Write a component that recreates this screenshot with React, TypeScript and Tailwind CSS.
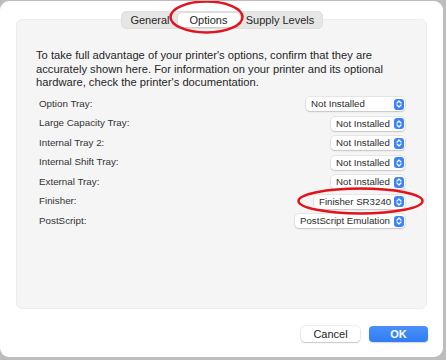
import React from 'react';

const font = { fontFamily: '"Liberation Sans", Arial, sans-serif' };

type Row = { label: string; value: string; width: string };

const rows: Row[] = [
  { label: 'Option Tray:', value: 'Not Installed', width: 'w-[99px]' },
  { label: 'Large Capacity Tray:', value: 'Not Installed', width: 'w-[74px]' },
  { label: 'Internal Tray 2:', value: 'Not Installed', width: 'w-[74px]' },
  { label: 'Internal Shift Tray:', value: 'Not Installed', width: 'w-[74px]' },
  { label: 'External Tray:', value: 'Not Installed', width: 'w-[74px]' },
  { label: 'Finisher:', value: 'Finisher SR3240', width: 'w-[91px]' },
  { label: 'PostScript:', value: 'PostScript Emulation', width: 'w-[110px]' },
];

const Stepper = () => (
  <span className="shrink-0 w-[10px] h-[11px] rounded-[3px] bg-[#3a84f6] flex items-center justify-center">
    <svg width="6" height="8" viewBox="0 0 6 8" fill="none" stroke="white" strokeWidth="1.2" strokeLinecap="round" strokeLinejoin="round">
      <path d="M1 3 L3 1 L5 3" />
      <path d="M1 5 L3 7 L5 5" />
    </svg>
  </span>
);

const Popup: React.FC<{ value: string; width: string }> = ({ value, width }) => (
  <div className={`${width} h-[14px] rounded-[4px] bg-white shadow-[0_0_0_0.5px_rgba(0,0,0,0.12),0_1px_1.5px_rgba(0,0,0,0.15)] flex items-center justify-between pl-[5px] pr-[1.5px]`}>
    <span className="text-[9.7px] text-[#2b2b2b] leading-none whitespace-nowrap">{value}</span>
    <Stepper />
  </div>
);

export default function App() {
  return (
    <div className="w-[446px] h-[360px] bg-[#bdbdbd] overflow-hidden" style={font}>
      <div className="relative w-[443px] h-[356px] mt-[1px] bg-white rounded-[9px] flex flex-col">
        {/* settings panel */}
        <div className="mx-[16px] mt-[18px] h-[290px] bg-[#f5f5f5] rounded-[6px] border border-[#ececec] flex flex-col">
          <div className="self-center -mt-[9px] w-[202px] h-[18px] rounded-[5px] bg-[#e6e6e6] border border-[#e0e0e0] flex items-center p-[1px] text-[11px] text-[#262626]">
            <div className="w-[55px] h-full flex items-center justify-center">General</div>
            <div className="w-[62px] h-full flex items-center justify-center bg-white rounded-[4px] shadow-[0_0_1px_rgba(0,0,0,0.3),0_1px_1px_rgba(0,0,0,0.08)]">Options</div>
            <div className="flex-1 h-full flex items-center justify-center">Supply Levels</div>
          </div>

          <p className="mt-[20px] pl-[19px] pr-[18px] text-[11.2px] leading-[13.5px] text-[#262626]">
            To take full advantage of your printer's options, confirm that they are accurately shown here. For information on your printer and its optional hardware, check the printer's documentation.
          </p>

          <div className="mt-[5px] pl-[22px] pr-[21px] flex flex-col">
            {rows.map((r) => (
              <div key={r.label} className="h-[19.5px] flex items-center justify-between">
                <span className="text-[9.8px] text-[#333]">{r.label}</span>
                <Popup value={r.value} width={r.width} />
              </div>
            ))}
          </div>
        </div>

        {/* buttons */}
        <div className="mt-[17px] pr-[15px] flex justify-end gap-[9px] text-[11px]">
          <button className="w-[59px] h-[16px] rounded-[4px] bg-white text-[#262626] shadow-[0_0_0_0.5px_rgba(0,0,0,0.12),0_1px_1.5px_rgba(0,0,0,0.18)] flex items-center justify-center">
            Cancel
          </button>
          <button className="w-[59px] h-[16px] rounded-[4px] bg-gradient-to-b from-[#4a90f8] to-[#2f7cf6] text-white font-semibold shadow-[0_1px_1.5px_rgba(0,0,0,0.18)] flex items-center justify-center">
            OK
          </button>
        </div>

        {/* annotation circles */}
        <svg className="absolute left-0 top-0 pointer-events-none" width="443" height="356" viewBox="0 0 443 356" fill="none">
          <ellipse cx="206.5" cy="16" rx="36" ry="15.5" stroke="#e3131b" strokeWidth="2.5" />
          <ellipse cx="360.5" cy="200" rx="62" ry="12.5" stroke="#e3131b" strokeWidth="2.5" />
        </svg>
      </div>
    </div>
  );
}
